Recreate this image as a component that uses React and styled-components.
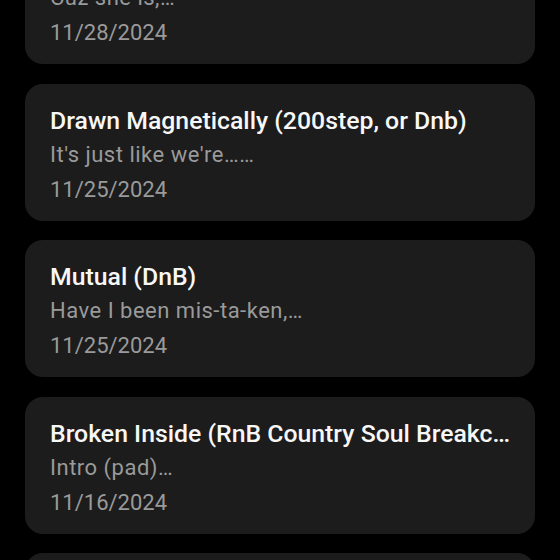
import React from 'react';
import styled, { createGlobalStyle } from 'styled-components';

const Global = createGlobalStyle`
  html, body {
    margin: 0;
    padding: 0;
    background: #000;
    height: 100%;
    overflow: hidden;
  }
  body {
    font-family: Roboto, "Noto Sans", sans-serif;
  }
`;

const Screen = styled.div`
  width: 560px;
  height: 560px;
  overflow: hidden;
  background: #000;
`;

const List = styled.div`
  display: flex;
  flex-direction: column;
  gap: 19.5px;
  padding: 0 25px;
  margin-top: -73px;
`;

const Card = styled.div`
  background: #1c1c1c;
  border-radius: 18px;
  height: 137px;
  box-sizing: border-box;
  padding: 22px 17px 15px 25px;
  display: flex;
  flex-direction: column;
`;

const Title = styled.div`
  color: #f7f7f7;
  font-size: 24.8px;
  font-weight: 500;
  line-height: 30px;
  white-space: nowrap;
  overflow: hidden;
  text-overflow: ellipsis;
`;

const Preview = styled.div`
  color: #9a9a9a;
  font-size: 22px;
  letter-spacing: 0.5px;
  line-height: 38px;
  white-space: nowrap;
  overflow: hidden;
  text-overflow: ellipsis;
`;

const DateLine = styled.div`
  color: #9a9a9a;
  font-size: 22px;
  line-height: 32px;
`;

const songs = [
  { title: 'Ocean Eyes', preview: 'Cuz she is,…', date: '11/28/2024' },
  { title: 'Drawn Magnetically (200step, or Dnb)', preview: "It's just like we're……", date: '11/25/2024' },
  { title: 'Mutual (DnB)', preview: 'Have I been mis-ta-ken,…', date: '11/25/2024' },
  { title: 'Broken Inside (RnB Country Soul Breakcore)', preview: 'Intro (pad)…', date: '11/16/2024' },
  { title: 'Untitled', preview: 'Verse…', date: '11/10/2024' },
];

export default function App() {
  return (
    <Screen>
      <Global />
      <List>
        {songs.map((s, i) => (
          <Card key={i}>
            <Title>{s.title}</Title>
            <Preview>{s.preview}</Preview>
            <DateLine>{s.date}</DateLine>
          </Card>
        ))}
      </List>
    </Screen>
  );
}
